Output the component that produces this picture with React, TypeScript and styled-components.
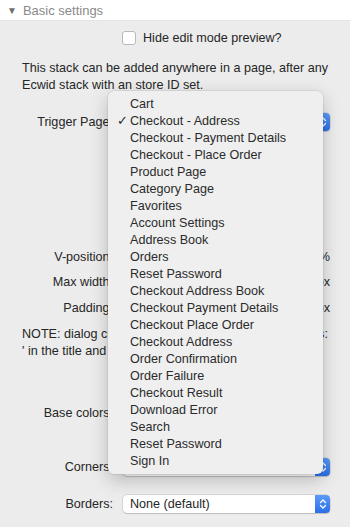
import styled, { createGlobalStyle } from "styled-components";

const GlobalStyle = createGlobalStyle`
  html, body {
    margin: 0;
    padding: 0;
    background: #ececec;
    font-family: "Liberation Sans", Arial, sans-serif;
    font-size: 12.6px;
    color: #262626;
  }
`;

const Page = styled.div`
  position: relative;
  width: 350px;
  height: 527px;
  overflow: hidden;
  background: #ececec;
`;

const SectionHeader = styled.div`
  display: flex;
  align-items: center;
  gap: 6px;
  height: 20px;
  padding-left: 7px;
  background: #ffffff;
  color: #8a8a8a;
  font-size: 13px;
  border-bottom: 1px solid #e4e4e4;
`;

const Triangle = styled.span`
  font-size: 10px;
  color: #6f6f6f;
`;

const Panel = styled.div`
  display: flex;
  flex-direction: column;
  padding: 0 20px 0 22px;
`;

const CheckRow = styled.label`
  display: flex;
  align-items: center;
  gap: 7px;
  margin-top: 9px;
  padding-left: 100px;
  height: 16px;
`;

const CheckBox = styled.span`
  width: 12px;
  height: 12px;
  border: 1px solid #b9b9b9;
  border-radius: 3px;
  background: #fff;
`;

const Note = styled.p<{ $top: number }>`
  margin: ${(p) => p.$top}px 0 0;
  line-height: 16.5px;
  white-space: nowrap;
`;

const Row = styled.div<{ $top: number }>`
  display: grid;
  grid-template-columns: 113px 207px;
  column-gap: 10px;
  align-items: center;
  margin-top: ${(p) => p.$top}px;
  margin-left: -22px;
  height: 18px;
`;

const Label = styled.span`
  text-align: right;
  white-space: nowrap;
`;

const Control = styled.div`
  display: flex;
  align-items: center;
  justify-content: flex-end;
  gap: 4px;
`;

const Select = styled.div`
  position: relative;
  display: flex;
  align-items: center;
  height: 18px;
  box-sizing: border-box;
  padding-left: 7px;
  background: #ffffff;
  border-radius: 4px;
  box-shadow: 0 0 0 0.5px rgba(0, 0, 0, 0.18), 0 1px 1px rgba(0, 0, 0, 0.12);
`;

const Stepper = styled.span`
  position: absolute;
  top: 0;
  right: 0;
  bottom: 0;
  width: 15px;
  display: flex;
  align-items: center;
  justify-content: center;
  border-radius: 0 4px 4px 0;
  background: linear-gradient(#5b9bf8, #2a6fe6);
`;

const Menu = styled.ul`
  position: absolute;
  left: 108px;
  top: 91px;
  width: 215px;
  margin: 0;
  padding: 5px 0 4px;
  list-style: none;
  background: #efefef;
  border-radius: 6px;
  box-shadow: 0 0 0 0.5px rgba(0, 0, 0, 0.12), 0 6px 18px rgba(0, 0, 0, 0.22);
`;

const MenuItem = styled.li`
  position: relative;
  height: 17px;
  line-height: 17px;
  padding-left: 22px;
  color: #2b2b2b;
  white-space: nowrap;
`;

const Check = styled.span`
  position: absolute;
  left: 9px;
`;

const Chevrons = () => (
  <svg width="8" height="12" viewBox="0 0 8 12">
    <path
      d="M1.5 4.5 L4 2 L6.5 4.5 M1.5 7.5 L4 10 L6.5 7.5"
      fill="none"
      stroke="#fff"
      strokeWidth="1.3"
      strokeLinecap="round"
      strokeLinejoin="round"
    />
  </svg>
);

const menuItems = [
  "Cart",
  "Checkout - Address",
  "Checkout - Payment Details",
  "Checkout - Place Order",
  "Product Page",
  "Category Page",
  "Favorites",
  "Account Settings",
  "Address Book",
  "Orders",
  "Reset Password",
  "Checkout Address Book",
  "Checkout Payment Details",
  "Checkout Place Order",
  "Checkout Address",
  "Order Confirmation",
  "Order Failure",
  "Checkout Result",
  "Download Error",
  "Search",
  "Reset Password",
  "Sign In",
];

export default function App() {
  return (
    <Page>
      <GlobalStyle />
      <SectionHeader>
        <Triangle>▼</Triangle>
        Basic settings
      </SectionHeader>
      <Panel>
        <CheckRow>
          <CheckBox />
          Hide edit mode preview?
        </CheckRow>
        <Note $top={14}>
          This stack can be added anywhere in a page, after any
          <br />
          Ecwid stack with an store ID set.
        </Note>
        <Row $top={20}>
          <Label>Trigger Page:</Label>
          <Select>
            Checkout - Address
            <Stepper>
              <Chevrons />
            </Stepper>
          </Select>
        </Row>
        <Row $top={117}>
          <Label>V-position:</Label>
          <Control>%</Control>
        </Row>
        <Row $top={7}>
          <Label>Max width:</Label>
          <Control>px</Control>
        </Row>
        <Row $top={8}>
          <Label>Padding:</Label>
          <Control>px</Control>
        </Row>
        <Note $top={9}>
          NOTE: dialog content can be styled by CSS with class:
          <br />' in the title and
        </Note>
        <Row $top={45}>
          <Label>Base colors:</Label>
          <Control />
        </Row>
        <Row $top={36}>
          <Label>Corners:</Label>
          <Select>
            Rounded
            <Stepper>
              <Chevrons />
            </Stepper>
          </Select>
        </Row>
        <Row $top={19}>
          <Label>Borders:</Label>
          <Select>
            None (default)
            <Stepper>
              <Chevrons />
            </Stepper>
          </Select>
        </Row>
      </Panel>
      <Menu>
        {menuItems.map((item, i) => (
          <MenuItem key={i}>
            {i === 1 && <Check>✓</Check>}
            {item}
          </MenuItem>
        ))}
      </Menu>
    </Page>
  );
}
